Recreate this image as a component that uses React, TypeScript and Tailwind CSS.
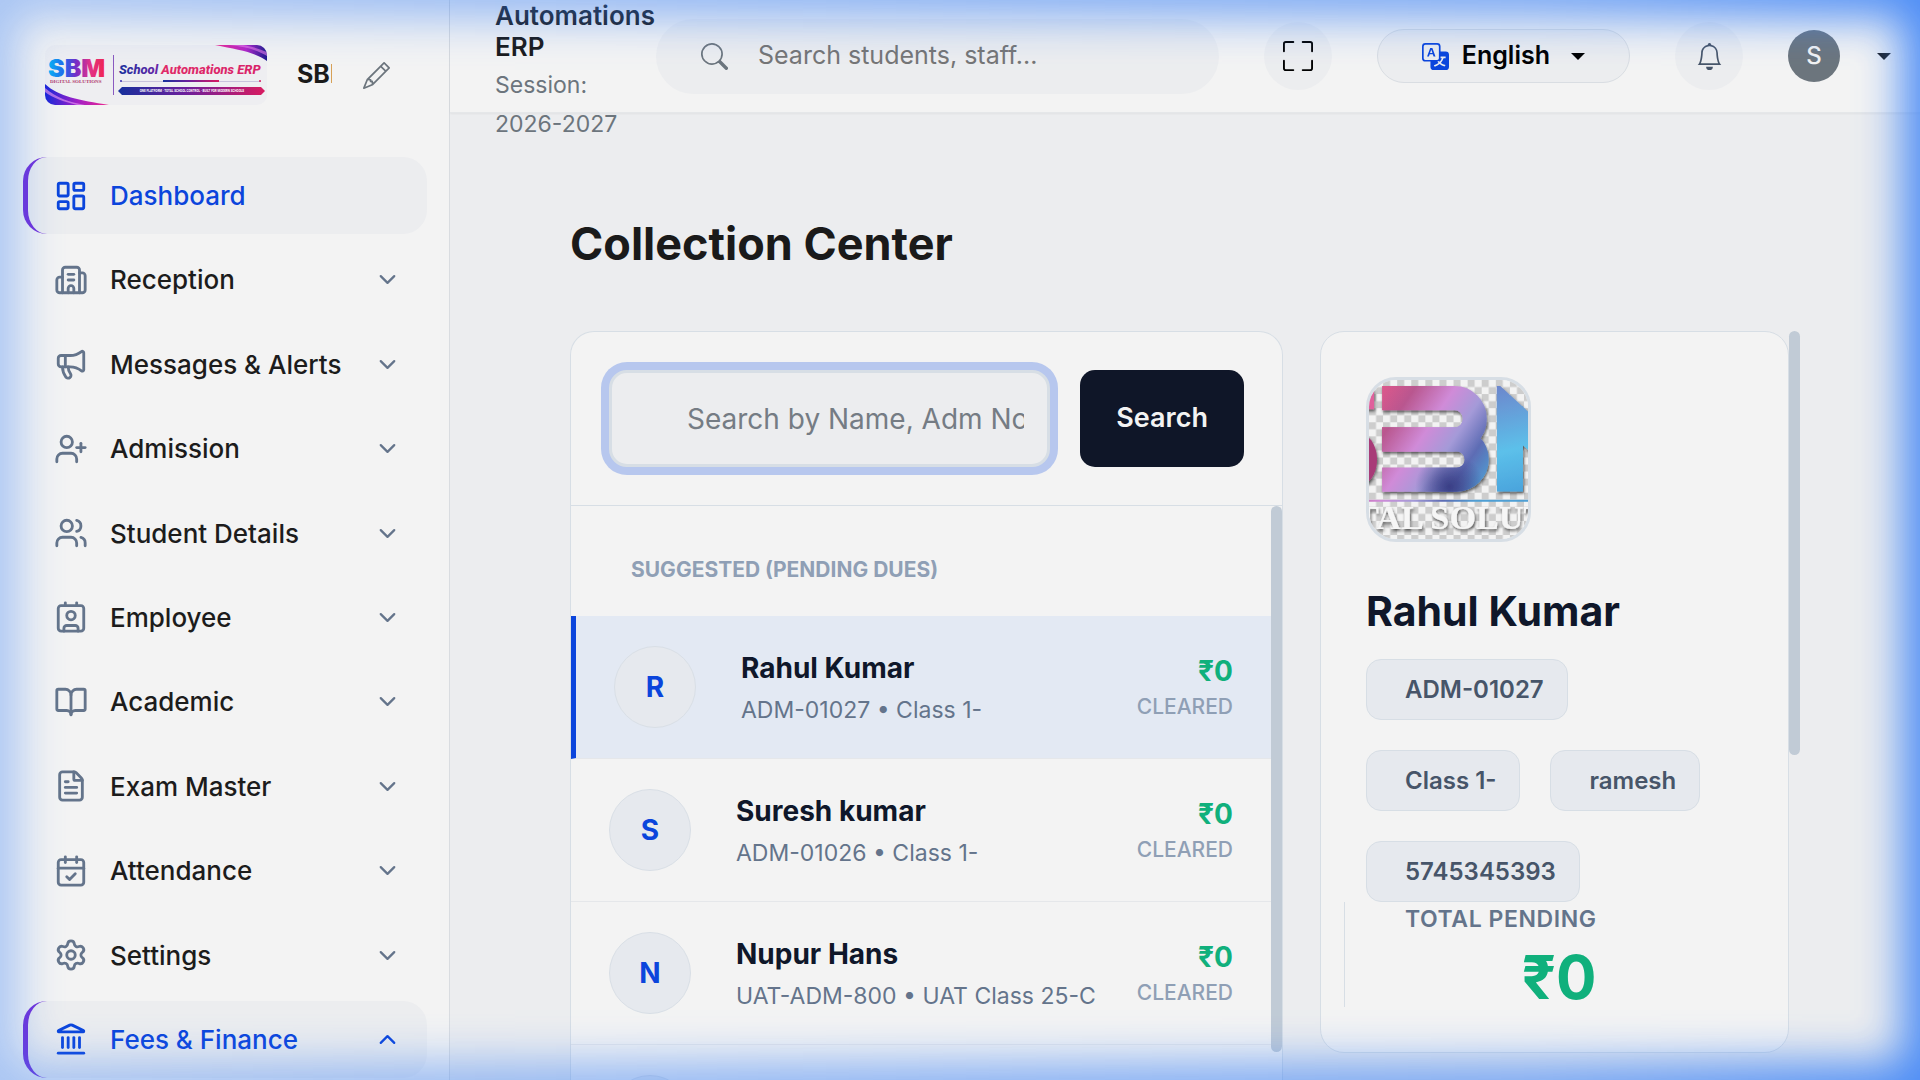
import {
    BookOpen,
    Building2,
    CalendarCheck,
    ChevronDown,
    ChevronUp,
    Contact,
    FileText,
    Landmark,
    LayoutDashboard,
    Megaphone,
    Settings,
    UserPlus,
    Users,
    type LucideIcon,
} from 'lucide-react';
import { BsBell, BsFullscreen, BsPencil, BsSearch, BsTranslate } from 'react-icons/bs';

interface NavItem {
    label: string;
    icon: LucideIcon;
    active?: boolean;
    expandable?: boolean;
}

interface Student {
    name: string;
    detail: string;
    selected?: boolean;
}

const navItems: NavItem[] = [
    { label: 'Dashboard', icon: LayoutDashboard, active: true },
    { label: 'Reception', icon: Building2, expandable: true },
    { label: 'Messages & Alerts', icon: Megaphone, expandable: true },
    { label: 'Admission', icon: UserPlus, expandable: true },
    { label: 'Student Details', icon: Users, expandable: true },
    { label: 'Employee', icon: Contact, expandable: true },
    { label: 'Academic', icon: BookOpen, expandable: true },
    { label: 'Exam Master', icon: FileText, expandable: true },
    { label: 'Attendance', icon: CalendarCheck, expandable: true },
    { label: 'Settings', icon: Settings, expandable: true },
    { label: 'Fees & Finance', icon: Landmark, active: true, expandable: true },
];

const students: Student[] = [
    { name: 'Rahul Kumar', detail: 'ADM-01027 • Class 1-', selected: true },
    { name: 'Suresh kumar', detail: 'ADM-01026 • Class 1-' },
    { name: 'Nupur Hans', detail: 'UAT-ADM-800 • UAT Class 25-C' },
    { name: 'Amit Hans', detail: 'UAT-ADM-801 • UAT Class 25-C' },
];

const chips = ['ADM-01027', 'Class 1-', 'ramesh', '5745345393'];

function BrandLogo() {
    return (
        <svg viewBox="0 0 222 60" className="w-[222px] h-[60px] shrink-0 rounded-[10px]" role="img" aria-label="School Automations ERP">
            <defs>
                <linearGradient id="sbm" x1="0" x2="1">
                    <stop offset="0" stopColor="#06b6f4" />
                    <stop offset="0.3" stopColor="#2563eb" />
                    <stop offset="0.5" stopColor="#7a2bc4" />
                    <stop offset="0.72" stopColor="#e0338c" />
                    <stop offset="1" stopColor="#f0264f" />
                </linearGradient>
                <linearGradient id="title" gradientUnits="userSpaceOnUse" x1="74" x2="219" y1="0" y2="0">
                    <stop offset="0" stopColor="#1c2f9c" />
                    <stop offset="0.28" stopColor="#6a25a8" />
                    <stop offset="0.29" stopColor="#e02a68" />
                    <stop offset="1" stopColor="#d8226a" />
                </linearGradient>
                <linearGradient id="ribbon" x1="0" x2="1">
                    <stop offset="0" stopColor="#16309c" />
                    <stop offset="0.45" stopColor="#6a1f9c" />
                    <stop offset="1" stopColor="#d81b60" />
                </linearGradient>
                <linearGradient id="swoosh" x1="0" x2="1">
                    <stop offset="0" stopColor="#1626d8" />
                    <stop offset="0.5" stopColor="#a020c8" />
                    <stop offset="1" stopColor="#f0288c" />
                </linearGradient>
                <linearGradient id="swooshTop" x1="0" x2="1">
                    <stop offset="0" stopColor="#f0288c" />
                    <stop offset="0.6" stopColor="#b026c8" />
                    <stop offset="1" stopColor="#1c1a8c" />
                </linearGradient>
            </defs>
            <rect width="222" height="60" fill="#eeeef1" />
            <path d="M170 0H222V16C210 7 194 5 170 0Z" fill="url(#swooshTop)" />
            <path d="M184 0C202 2 212 5 222 11V7C212 3 204 1 198 0Z" fill="#e879e8" opacity="0.6" />
            <path d="M0 39C14 52 34 55 64 60H0Z" fill="url(#swoosh)" />
            <path d="M0 43C12 53 24 57 40 60H32C20 57 8 53 0 47Z" fill="#e08cf0" opacity="0.7" />
            <text x="3" y="32" fontFamily="Inter, sans-serif" fontWeight="900" fontSize="25" fill="url(#sbm)">SBM</text>
            <text x="5" y="38" fontFamily="'Liberation Serif', serif" fontWeight="700" fontSize="5" fill="#b03a6e">DIGITAL SOLUTIONS</text>
            <rect x="68" y="10" width="1" height="40" fill="#8a5ac0" />
            <text x="74" y="29" fontFamily="Roboto, sans-serif" fontWeight="800" fontStyle="italic" fontSize="13" fill="url(#title)">
                School Automations ERP
            </text>
            <rect x="76" y="36" width="140" height="1" fill="#c9c4dc" />
            <rect x="118" y="35" width="56" height="2" fill="url(#ribbon)" />
            <circle cx="76" cy="36" r="1" fill="#3b2fb0" />
            <circle cx="215" cy="36" r="1" fill="#d81b60" />
            <path d="M77 42H216L220 46L216 50H77L73 46Z" fill="url(#ribbon)" />
            <text x="147" y="47" textAnchor="middle" fontFamily="Roboto, sans-serif" fontWeight="700" fontSize="3" fill="#fff">
                ONE PLATFORM · TOTAL SCHOOL CONTROL · BUILT FOR MODERN SCHOOLS
            </text>
        </svg>
    );
}

function StudentPhoto() {
    return (
        <svg viewBox="0 0 158 158" className="block w-full h-full" role="img" aria-label="Rahul Kumar">
            <defs>
                <pattern id="checker" width="14" height="14" patternUnits="userSpaceOnUse">
                    <rect width="14" height="14" fill="#f3f3f3" />
                    <rect width="7" height="7" fill="#cdcdcd" />
                    <rect x="7" y="7" width="7" height="7" fill="#cdcdcd" />
                </pattern>
                <linearGradient id="foil" gradientUnits="userSpaceOnUse" x1="8" y1="20" x2="122" y2="96">
                    <stop offset="0" stopColor="#d9588c" />
                    <stop offset="0.18" stopColor="#b9578f" />
                    <stop offset="0.42" stopColor="#d08bd8" />
                    <stop offset="0.62" stopColor="#a49ad8" />
                    <stop offset="0.8" stopColor="#5d6cb4" />
                    <stop offset="1" stopColor="#4f9fd4" />
                </linearGradient>
                <radialGradient id="foilDark" gradientUnits="userSpaceOnUse" cx="80" cy="106" r="34">
                    <stop offset="0" stopColor="#3a3f86" />
                    <stop offset="1" stopColor="#3a3f86" stopOpacity="0" />
                </radialGradient>
                <linearGradient id="foilBlue" gradientUnits="userSpaceOnUse" x1="126" y1="6" x2="150" y2="112">
                    <stop offset="0" stopColor="#6d86cc" />
                    <stop offset="0.6" stopColor="#5cc0ea" />
                    <stop offset="1" stopColor="#4aa3dc" />
                </linearGradient>
                <clipPath id="lobes">
                    <rect x="13" y="0" width="112" height="118" />
                </clipPath>
                <clipPath id="post">
                    <rect x="127" y="6" width="40" height="105" />
                </clipPath>
                <filter id="drop" x="-20%" y="-20%" width="140%" height="140%">
                    <feDropShadow dx="1" dy="2" stdDeviation="1.5" floodColor="#000" floodOpacity="0.6" />
                </filter>
            </defs>
            <rect width="158" height="158" fill="url(#checker)" />
            <g filter="url(#drop)">
                <rect x="-10" y="8" width="15" height="21" fill="#e0609c" />
                <ellipse cx="-12" cy="79" rx="20" ry="27" fill="#a83a78" />
                <g clipPath="url(#lobes)" fill="none" strokeWidth="24">
                    <g stroke="url(#foil)">
                        <rect x="-60" y="18" width="165" height="41" rx="20" />
                        <rect x="-60" y="59" width="167" height="40" rx="20" />
                    </g>
                    <rect x="-60" y="59" width="167" height="40" rx="20" stroke="url(#foilDark)" />
                </g>
                <g clipPath="url(#post)">
                    <rect x="127" y="26" width="26" height="85" fill="url(#foilBlue)" />
                    <line x1="112" y1="8" x2="176" y2="67" stroke="url(#foilBlue)" strokeWidth="28" />
                </g>
            </g>
            <rect x="0" y="119" width="158" height="2" fill="url(#foil)" />
            <text x="-13" y="148" fontFamily="'Liberation Serif', serif" fontSize="34" fontWeight="700" fill="#f6f6f6" filter="url(#drop)">TAL SOLUT</text>
        </svg>
    );
}

function Caret() {
    return <span className="w-0 h-0 border-x-[7px] border-x-transparent border-t-[7px] border-t-current" />;
}

function Sidebar() {
    return (
        <aside className="flex flex-col w-[450px] shrink-0 bg-[#f3f3f3] border-r border-[#d9dce0] pb-[2px]">
            {/* Brand */}
            <div className="flex items-center px-[45px] pt-[45px] mb-[52px]">
                <BrandLogo />
                <span className="ml-[30px] w-[35px] overflow-hidden whitespace-nowrap text-[25px] font-bold text-[#1a1a1a]">SBM</span>
                <button type="button" aria-label="Edit school name" className="ml-[31px] text-[#6c757d]">
                    <BsPencil className="size-[27px]" />
                </button>
            </div>

            <nav className="flex-1 flex flex-col justify-between pl-[23px] pr-[22px]">
                {navItems.map(({ label, icon: Icon, active, expandable }) => {
                    const Chevron = active ? ChevronUp : ChevronDown;
                    return (
                        <a
                            key={label}
                            href="#"
                            className={`flex items-center h-[77px] pl-[26px] pr-[26px] rounded-[24px] border-l-[5px] text-[26px] font-medium ${active
                                ? 'bg-[#ecedef] border-[#722ed8] text-[#0b45dc]'
                                : 'border-transparent text-[#1c1c1c]'}`}
                        >
                            <Icon className={`size-[34px] mr-[22px] shrink-0 ${active ? '' : 'text-[#64748b]'}`} />
                            <span className="flex-1 whitespace-nowrap">{label}</span>
                            {expandable && <Chevron className={`size-[27px] ${active ? '' : 'text-[#64748b]'}`} />}
                        </a>
                    );
                })}
            </nav>
        </aside>
    );
}

function Header() {
    return (
        <header className="flex items-center h-[113px] shrink-0 pl-[45px] pr-[29px] bg-[#f3f3f3] border-b border-[#e5e7e9] shadow-xs">
            <div className="w-[161px] shrink-0">
                <h2 className="mb-1 text-[26px] leading-[31px] font-semibold text-[#1a1a1a]">School Automations ERP</h2>
                <p className="text-[23px] leading-[39px] text-[#6c757d]">Session: 2026-2027</p>
            </div>

            <div className="flex-1 min-w-0 flex items-center gap-[45px]">
                <label className="flex-1 min-w-0 flex items-center h-[75px] px-[45px] gap-[30px] rounded-full bg-[#ecedef]">
                    <BsSearch className="size-[27px] shrink-0 text-[#6c757d]" />
                    <input
                        type="text"
                        aria-label="Search students, staff"
                        placeholder="Search students, staff..."
                        className="flex-1 min-w-0 bg-transparent text-[25px] outline-none placeholder:text-[#757575]"
                    />
                </label>
                <button type="button" aria-label="Fullscreen" className="flex items-center justify-center size-[68px] shrink-0 rounded-full bg-[#ecedef] text-black">
                    <BsFullscreen className="size-[30px]" />
                </button>
                <button type="button" className="flex items-center h-[54px] px-[44px] rounded-full border border-[#d9dde2] bg-[#ecedef] text-[25px] font-semibold text-black">
                    <BsTranslate className="size-[27px] mr-[13px] text-[#0b45dc]" />
                    <span className="mr-[21px]">English</span>
                    <Caret />
                </button>
                <button type="button" aria-label="Notifications" className="flex items-center justify-center size-[68px] shrink-0 rounded-full bg-[#ecedef] text-[#475569]">
                    <BsBell className="size-[27px]" />
                </button>
                <button type="button" aria-label="Account" className="flex items-center gap-[37px] text-[#1a1a1a]">
                    <span className="flex items-center justify-center size-[52px] rounded-full bg-[#6c757d] text-2xl font-medium text-[#f3f3f3]">S</span>
                    <Caret />
                </button>
            </div>
        </header>
    );
}

function StudentRow({ name, detail, selected }: Student) {
    return (
        <li className={`flex items-center min-h-[143px] px-[38px] border-b border-[#e5e7ea] ${selected ? 'bg-[#e3e9f3] border-l-[5px] border-l-[#0b45dc]' : ''}`}>
            <div className="flex items-center justify-center size-[82px] shrink-0 rounded-full border border-[#d9dfe6] bg-[#e6e9ee] text-[28px] font-bold text-[#0b45dc]">
                {name[0]}
            </div>
            <div className="flex-1 ml-[45px] pt-1 whitespace-nowrap">
                <p className="text-[28px] leading-[42px] font-bold text-[#0f172a]">{name}</p>
                <p className="text-[23px] leading-[42px] text-[#64748b]">{detail}</p>
            </div>
            <div className="pt-1 text-right">
                <p className="text-[28px] leading-[36px] font-bold text-[#10b07c]">₹0</p>
                <p className="text-[21px] leading-[36px] font-medium text-[#8f9fb5]">CLEARED</p>
            </div>
        </li>
    );
}

function StudentSearch() {
    return (
        <section className="flex flex-col rounded-t-[24px] border border-b-0 border-[#d7dee5] bg-[#f3f3f3] overflow-hidden">
            <form className="flex gap-[30px] px-[38px] py-[38px] border-b border-[#d7dee5]">
                <input
                    type="text"
                    aria-label="Search student"
                    placeholder="Search by Name, Adm No, Mobile..."
                    className="flex-1 min-w-0 h-[97px] pl-[75px] pr-[23px] rounded-[18px] border-[3px] border-[#d7dee5] bg-[#ecedef] text-[28px] outline-none ring-[8px] ring-[#b7c7ee] placeholder:text-[#757c84]"
                />
                <button type="button" className="px-[36px] rounded-[15px] bg-[#0f1628] text-[27px] font-semibold text-[#f3f3f3]">
                    Search
                </button>
            </form>

            <div className="flex flex-1 min-h-0">
                <div className="flex-1 overflow-hidden">
                    <h3 className="pl-[60px] pt-[46px] pb-[28px] text-[21px] leading-[36px] font-bold text-[#8f9fb5]">SUGGESTED (PENDING DUES)</h3>
                    <ul>
                        {students.map((student) => (
                            <StudentRow key={student.name} {...student} />
                        ))}
                    </ul>
                </div>
                {/* Scroll thumb */}
                <div className="w-[11px] h-[546px] rounded-full bg-[#c1cbd6]" />
            </div>
        </section>
    );
}

function StudentSummary() {
    return (
        <section className="flex items-start">
            <div className="flex-1 p-[45px] rounded-[24px] border border-[#d7dee5] bg-[#f3f3f3]">
                <div className="size-[165px] rounded-[30px] border-[3px] border-[#d7dee5] overflow-hidden">
                    <StudentPhoto />
                </div>
                <h2 className="mt-[45px] text-[41px] leading-[48px] font-bold text-[#0f172a]">Rahul Kumar</h2>
                <div className="flex flex-wrap gap-[30px] mt-6">
                    {chips.map((chip) => (
                        <span key={chip} className="pl-[38px] pr-[23px] rounded-[15px] border border-[#d7dee5] bg-[#e6e9ee] text-[24px] leading-[59px] font-semibold text-[#475569]">
                            {chip}
                        </span>
                    ))}
                </div>
                <div className="w-fit -ml-[22px] pl-[60px] border-l border-[#d7dee5] text-right">
                    <p className="mb-[11px] text-[23px] leading-[34px] font-semibold tracking-wide text-[#64748b]">TOTAL PENDING</p>
                    <p className="text-[60px] leading-[60px] font-bold text-[#10b07c]">₹0</p>
                </div>
            </div>
            <div className="w-[11px] h-[424px] rounded-full bg-[#c1cbd6]" />
        </section>
    );
}

export default function App() {
    return (
        <div className="relative flex h-screen overflow-hidden bg-[#ecedef] font-['Inter',sans-serif]">
            <Sidebar />
            <div className="flex-1 flex flex-col min-w-0">
                <Header />
                <main className="flex-1 flex flex-col min-h-0 px-[120px] pt-[104px]">
                    <h1 className="mb-[60px] text-[45px] leading-[54px] font-bold text-[#1a1a1a]">Collection Center</h1>
                    <div className="flex-1 min-h-0 grid grid-cols-[minmax(0,1fr)_480px] gap-[37px]">
                        <StudentSearch />
                        <StudentSummary />
                    </div>
                </main>
            </div>

            {/* Edge glow */}
            <div className="absolute inset-0 pointer-events-none shadow-[inset_0_0_44px_18px_#3b82f6] [mask-image:linear-gradient(to_right,rgba(0,0,0,0.4),rgba(0,0,0,0.55)_40%,rgba(0,0,0,0.68)_80%,rgba(0,0,0,0.9))]" />
        </div>
    );
}
